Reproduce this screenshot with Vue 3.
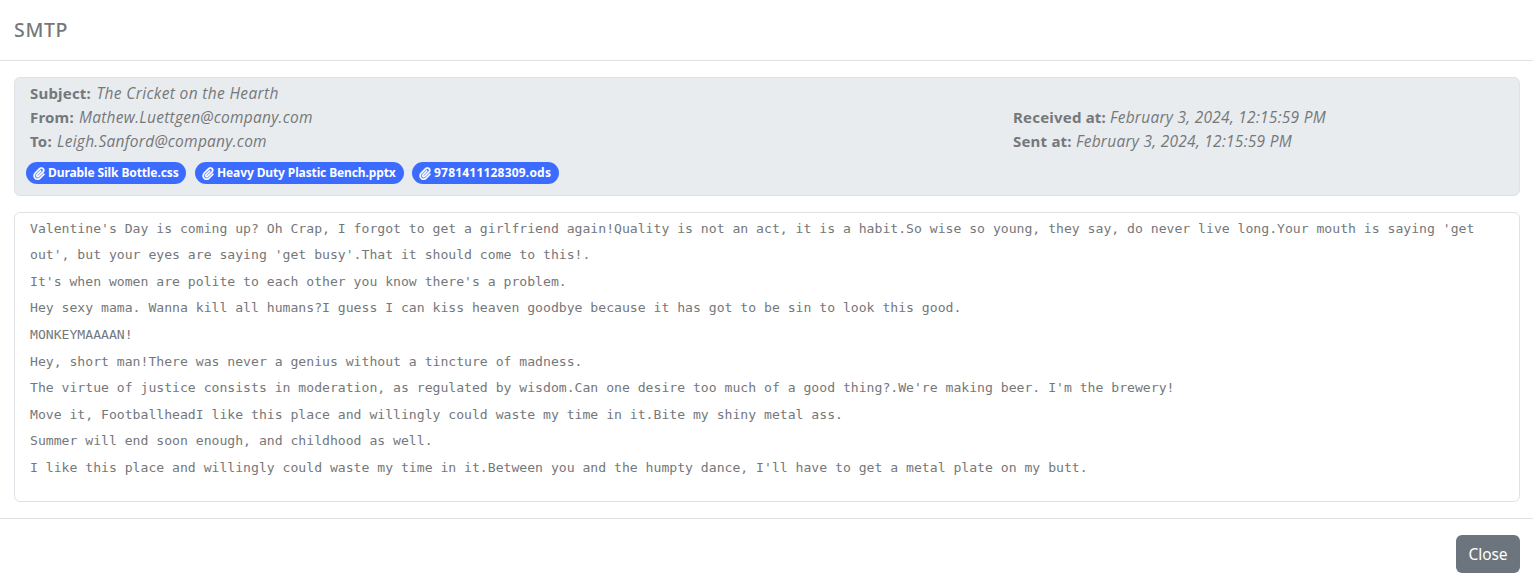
<script setup>
const attachments = [
  { name: 'Durable Silk Bottle.css', kind: 'first' },
  { name: 'Heavy Duty Plastic Bench.pptx', kind: 'second' },
  { name: '9781411128309.ods', kind: 'third' },
]

const lines = [
  "Valentine's Day is coming up? Oh Crap, I forgot to get a girlfriend again!Quality is not an act, it is a habit.So wise so young, they say, do never live long.Your mouth is saying 'get out', but your eyes are saying 'get busy'.That it should come to this!.",
  "It's when women are polite to each other you know there's a problem.",
  'Hey sexy mama. Wanna kill all humans?I guess I can kiss heaven goodbye because it has got to be sin to look this good.',
  'MONKEYMAAAAN!',
  'Hey, short man!There was never a genius without a tincture of madness.',
  "The virtue of justice consists in moderation, as regulated by wisdom.Can one desire too much of a good thing?.We're making beer. I'm the brewery!",
  'Move it, FootballheadI like this place and willingly could waste my time in it.Bite my shiny metal ass.',
  'Summer will end soon enough, and childhood as well.',
  "I like this place and willingly could waste my time in it.Between you and the humpty dance, I'll have to get a metal plate on my butt.",
]
</script>

<template>
  <div class="modal">
    <header class="modal-header">
      <h5 class="title">SMTP</h5>
    </header>
    <main class="modal-body">
      <section class="meta">
        <div class="meta-grid">
          <div class="people">
            <div class="row"><b class="k-subject">Subject:</b><i class="v-subject">The Cricket on the Hearth</i></div>
            <div class="row"><b class="k-from">From:</b><i class="v-from">Mathew.Luettgen@company.com</i></div>
            <div class="row"><b class="k-to">To:</b><i class="v-to">Leigh.Sanford@company.com</i></div>
          </div>
          <div class="dates">
            <div class="row"><b class="k-received">Received at:</b><i class="v-date">February 3, 2024, 12:15:59 PM</i></div>
            <div class="row"><b class="k-sent">Sent at:</b><i class="v-date">February 3, 2024, 12:15:59 PM</i></div>
          </div>
        </div>
        <div class="attachments">
          <span v-for="a in attachments" :key="a.name" class="badge" :class="a.kind">
            <svg class="clip" viewBox="0 0 448 512" aria-hidden="true">
              <path fill="currentColor" stroke="currentColor" stroke-width="16" d="M364.2 83.8c-24.4-24.4-64-24.4-88.4 0l-184 184c-42.1 42.1-42.1 110.3 0 152.4s110.3 42.1 152.4 0l152-152c10.9-10.9 28.7-10.9 39.6 0s10.9 28.7 0 39.6l-152 152c-64 64-167.6 64-231.6 0s-64-167.6 0-231.6l184-184c46.3-46.3 121.3-46.3 167.6 0s46.3 121.3 0 167.6l-176 176c-28.6 28.6-75 28.6-103.6 0s-28.6-75 0-103.6l144-144c10.9-10.9 28.7-10.9 39.6 0s10.9 28.7 0 39.6l-144 144c-6.7 6.7-6.7 17.7 0 24.4s17.7 6.7 24.4 0l176-176c24.4-24.4 24.4-64 0-88.4z" />
            </svg>
            <span class="badge-text">{{ a.name }}</span>
          </span>
        </div>
      </section>
      <section class="message">
        <p v-for="(line, i) in lines" :key="i" class="line">{{ line }}</p>
      </section>
    </main>
    <footer class="modal-footer">
      <button class="close" type="button">Close</button>
    </footer>
  </div>
</template>

<style>
body {
  margin: 0;
  background: #fff;
}
</style>

<style scoped>
.modal {
  width: 1533px;
  height: 587px;
  overflow: hidden;
  display: flex;
  flex-direction: column;
  box-sizing: border-box;
  color: #75787b;
  background: #fff;
  font-family: "Noto Sans", "Open Sans", sans-serif;
  font-size: 15px;
  line-height: 24px;
}
.modal-header {
  height: 60px;
  flex: none;
  display: flex;
  align-items: center;
  padding: 0 14px;
  border-bottom: 1px solid #dee2e6;
}
.title {
  margin: 0;
  font-size: 19.5px;
  font-weight: 550;
  line-height: 30px;
  letter-spacing: 0.65px;
}
.modal-body {
  flex: none;
  height: 457px;
  box-sizing: border-box;
  padding: 16px 13px 16px 14px;
  display: flex;
  flex-direction: column;
  gap: 16px;
}
.meta {
  height: 119px;
  flex: none;
  box-sizing: border-box;
  border: 1px solid #dee2e6;
  border-radius: 6px;
  background: #e8ecef;
  padding: 3px 11px;
}
.meta-grid {
  display: grid;
  grid-template-columns: 983px 1fr;
  padding-left: 4px;
}
.dates {
  padding-top: 24px;
}
.row {
  display: flex;
  height: 24px;
  white-space: nowrap;
}
.row b {
  flex: none;
  letter-spacing: 0.2px;
}
.row i {
  font-family: "Open Sans", "Noto Sans", sans-serif;
  font-size: 15.5px;
  letter-spacing: 0.26px;
}
.row .v-subject {
  letter-spacing: 0.34px;
}
.k-subject { width: 66.5px; }
.k-from { width: 49px; }
.k-to { width: 27px; }
.k-received { width: 97px; }
.k-sent { width: 63px; }
.attachments {
  display: flex;
  padding-top: 9px;
}
.badge {
  box-sizing: border-box;
  height: 22px;
  display: flex;
  align-items: center;
  padding-left: 7px;
  border-radius: 11px;
  background: #3b6cff;
  color: #fff;
  font-size: 12px;
  font-weight: 700;
  line-height: 22px;
  white-space: nowrap;
}
.first { width: 160px; margin-right: 9px; letter-spacing: -0.1px; }
.second { width: 209px; margin-right: 8px; letter-spacing: -0.12px; }
.third { width: 147px; letter-spacing: 0.2px; }
.clip {
  width: 12px;
  height: 13px;
  margin-right: 3px;
}
.message {
  flex: 1;
  box-sizing: border-box;
  border: 1px solid #dee2e6;
  border-radius: 6px;
  padding: 2.6px 15px;
  font-family: "DejaVu Sans Mono", monospace;
  font-size: 13.125px;
  line-height: 26.6px;
}
.line {
  margin: 0;
}
.modal-footer {
  flex: 1;
  border-top: 1px solid #dee2e6;
  padding: 16px 13px 0;
  display: flex;
  justify-content: flex-end;
  align-items: flex-start;
}
.close {
  width: 64px;
  height: 38px;
  padding: 0;
  border: 0;
  border-radius: 6px;
  background: #6c757d;
  color: #fff;
  font: inherit;
  font-size: 15.5px;
  letter-spacing: -0.1px;
}
</style>
